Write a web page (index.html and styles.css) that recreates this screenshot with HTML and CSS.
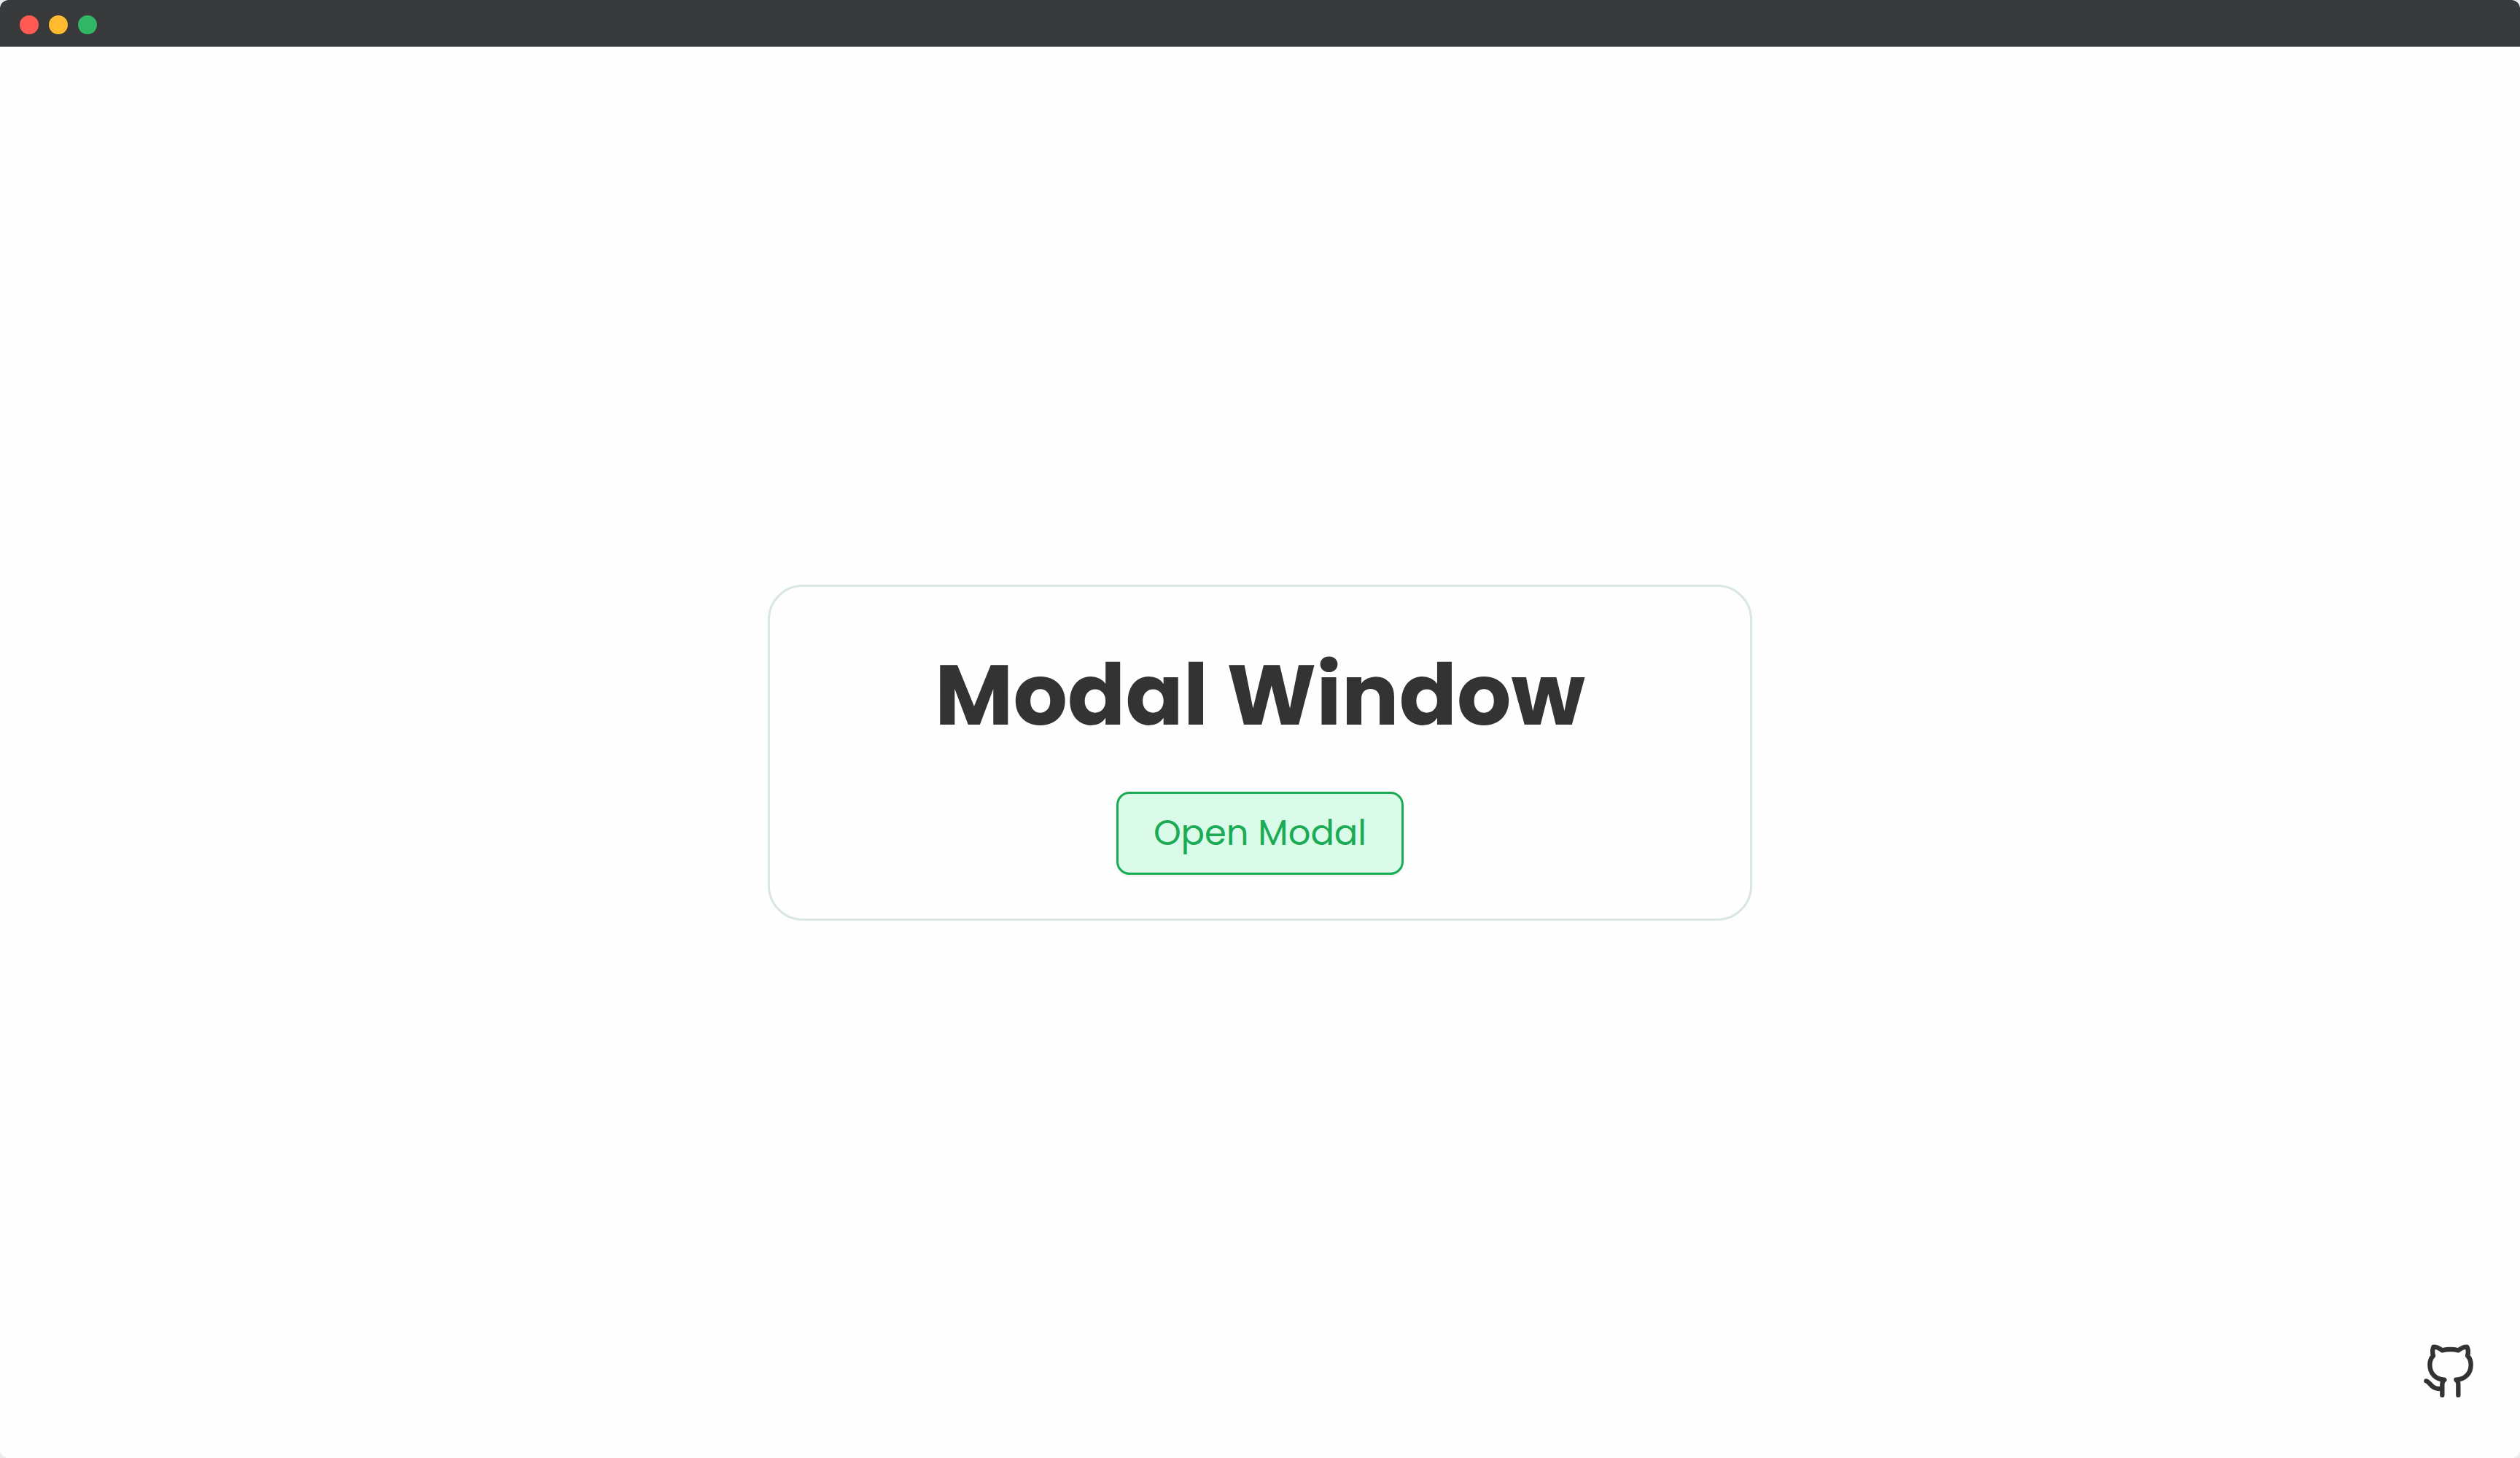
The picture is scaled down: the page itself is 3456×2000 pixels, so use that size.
FILE: index.html
```html
<!DOCTYPE html>
<html lang="en">
<head>
  <meta charset="utf-8">
  <meta name="viewport" content="width=device-width, initial-scale=1">
  <title>Modal Window</title>
  <link rel="stylesheet" href="styles.css">
</head>
<body>
  <div class="window">
    <header class="titlebar">
      <span class="dot dot-close"></span>
      <span class="dot dot-minimize"></span>
      <span class="dot dot-zoom"></span>
    </header>
    <main class="stage">
      <section class="card">
        <h1 class="title">Modal Window</h1>
        <button class="open-button" type="button">Open Modal</button>
      </section>
      <a class="github" href="https://github.com" aria-label="GitHub">
        <svg class="github-icon" viewBox="83 73 204 219" fill="none" stroke="currentColor" stroke-width="19" stroke-linecap="round" stroke-linejoin="round" aria-hidden="true">
          <path d="M159 282V237C159 228 162 224 168 219C132 217 108 194 108 157C108 143 113 129 122 120C118 107 119 94 123 84C137 83 148 90 159 98Q192 90 225 98C236 90 247 83 261 84C266 94 267 107 263 120C272 129 277 143 277 157C277 194 252 218 216 219C222 224 225 228 225 237V282"/>
          <path d="M93 224C109 226 114 262 155 255"/>
        </svg>
      </a>
    </main>
  </div>
</body>
</html>
```
FILE: styles.css
```css
* {
  box-sizing: border-box;
}

body {
  margin: 0;
  background: #e8eced;
  color: #333;
  font-family: Poppins, Inter, "Liberation Sans", sans-serif;
}

.window {
  display: flex;
  flex-direction: column;
  min-height: 100vh;
  overflow: hidden;
  border-radius: 12px;
  background: #fefefe;
}

.titlebar {
  display: flex;
  align-items: center;
  gap: 14px;
  height: 64px;
  padding: 4px 27px 0;
  background: #38393b;
}

.dot {
  width: 26px;
  height: 26px;
  border-radius: 50%;
}

.dot-close {
  background: #ff5b54;
}

.dot-minimize {
  background: #ffbb30;
}

.dot-zoom {
  background: #30b664;
}

.stage {
  position: relative;
  display: flex;
  flex: 1;
  align-items: center;
  justify-content: center;
}

.card {
  display: flex;
  flex-direction: column;
  align-items: center;
  gap: 45px;
  width: 100%;
  max-width: 1350px;
  padding: 60px;
  border: 3px solid #dae5e5;
  border-radius: 48px;
}

.title {
  margin: 0;
  font-size: 117px;
  font-weight: 700;
  line-height: 176px;
}

.open-button {
  padding: 18px 48px;
  border: 3px solid #1aab54;
  border-radius: 18px;
  background: #dafbe9;
  box-shadow: 0 3px 0 #f5f5f5;
  color: #1aab54;
  font-family: inherit;
  font-size: 48px;
  line-height: 72px;
  cursor: pointer;
}

.github {
  position: absolute;
  right: 64px;
  bottom: 83px;
  color: #333;
}

.github-icon {
  display: block;
  width: 68px;
  height: 73px;
}
```
